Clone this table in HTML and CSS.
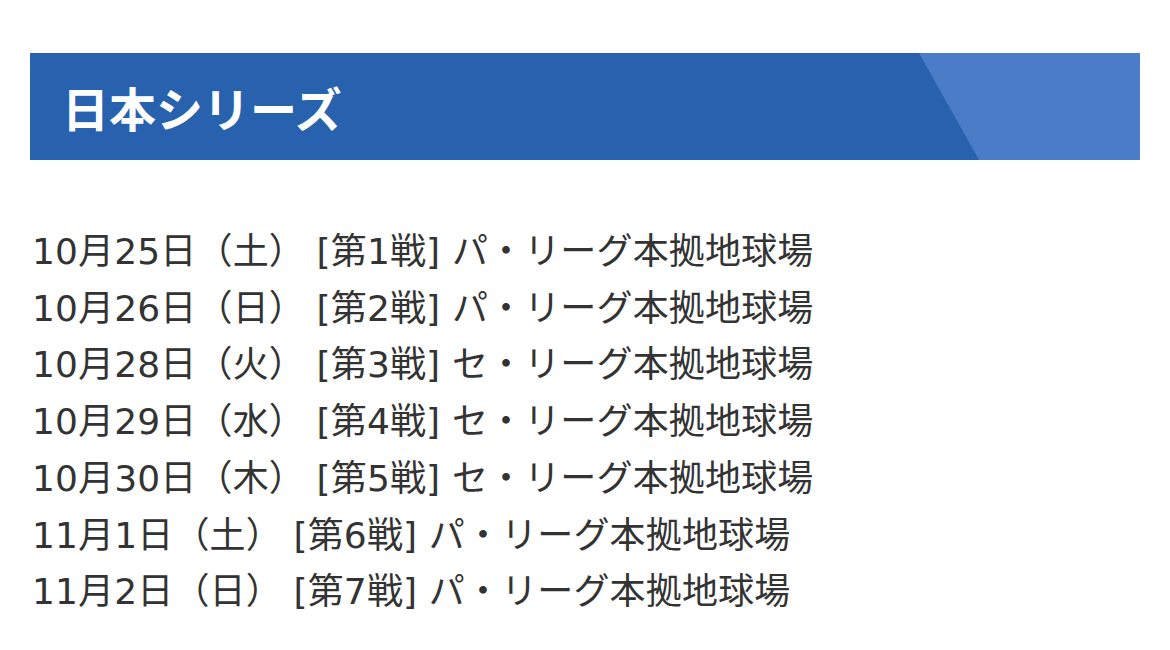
FILE: index.html
```html
<!DOCTYPE html>
<html lang="ja">
<head>
<meta charset="utf-8">
<link rel="stylesheet" href="styles.css">
</head>
<body>
<div class="page">
  <div class="banner">
    <h1 class="title">日本シリーズ</h1>
  </div>
  <ul class="schedule">
    <li>10月25日（土） [第1戦] パ・リーグ本拠地球場</li>
    <li>10月26日（日） [第2戦] パ・リーグ本拠地球場</li>
    <li>10月28日（火） [第3戦] セ・リーグ本拠地球場</li>
    <li>10月29日（水） [第4戦] セ・リーグ本拠地球場</li>
    <li>10月30日（木） [第5戦] セ・リーグ本拠地球場</li>
    <li>11月1日（土） [第6戦] パ・リーグ本拠地球場</li>
    <li>11月2日（日） [第7戦] パ・リーグ本拠地球場</li>
  </ul>
</div>
</body>
</html>
```
FILE: styles.css
```css
html, body {
  margin: 0;
  padding: 0;
  background: #ffffff;
}
body {
  font-family: "DejaVu Sans", "Noto Sans CJK JP", sans-serif;
  color: #333333;
}
.page {
  padding: 53px 30px 0 30px;
}
.banner {
  height: 107px;
  display: flex;
  align-items: center;
  padding-left: 32px;
  background: #2862ae;
  position: relative;
  overflow: hidden;
}
.banner::after {
  content: "";
  position: absolute;
  top: 0;
  right: 0;
  bottom: 0;
  width: 221px;
  background: #4a7cc8;
  clip-path: polygon(0 0, 100% 0, 100% 100%, 60px 100%);
}
.title {
  margin: 0;
  color: #ffffff;
  font-family: "Noto Sans CJK JP", sans-serif;
  font-size: 47px;
  font-weight: 700;
  line-height: 1;
  position: relative;
  z-index: 1;
}
.schedule {
  list-style: none;
  margin: 0;
  padding: 64px 0 0 2px;
}
.schedule li {
  font-size: 36px;
  line-height: 56.7px;
  letter-spacing: 0.15px;
  white-space: nowrap;
}
```
